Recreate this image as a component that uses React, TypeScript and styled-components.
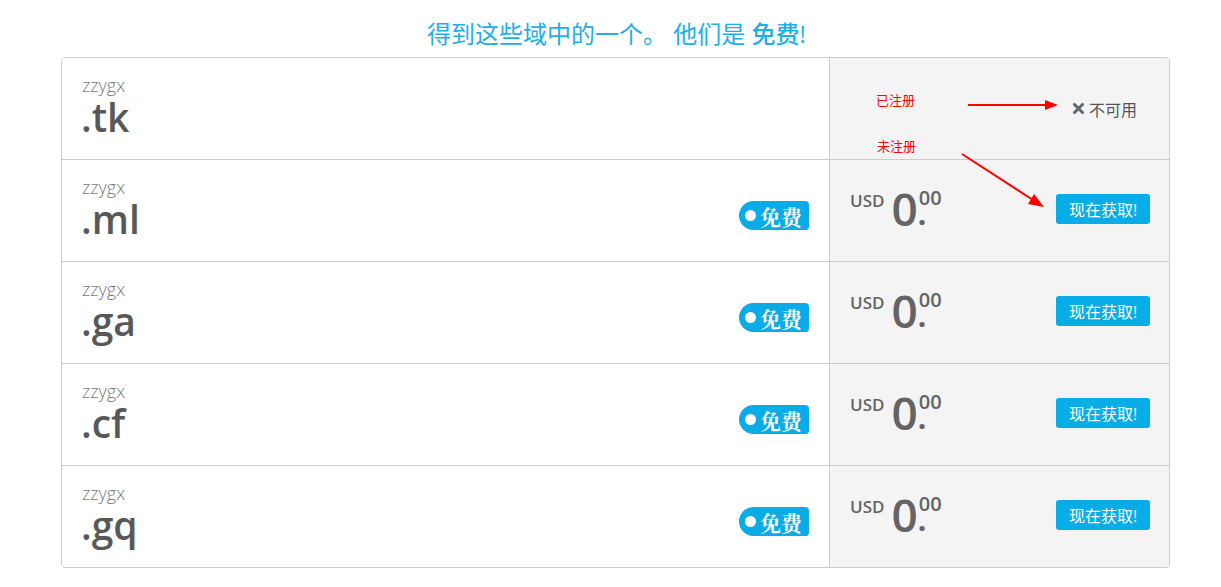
import React, { FunctionComponent } from 'react';
import styled, { createGlobalStyle } from 'styled-components';

const GlobalStyle = createGlobalStyle`
  body {
    margin: 0;
    background: #fff;
    font-family: "Open Sans", "Noto Sans CJK SC", sans-serif;
  }
`;

type Domain = {
  name: string;
  tld: string;
  available: boolean;
};

const domains: Domain[] = [
  { name: 'zzygx', tld: '.tk', available: false },
  { name: 'zzygx', tld: '.ml', available: true },
  { name: 'zzygx', tld: '.ga', available: true },
  { name: 'zzygx', tld: '.cf', available: true },
  { name: 'zzygx', tld: '.gq', available: true },
];

const TimesIcon = () => (
  <CrossIcon width="11" height="11" viewBox="0 0 11 11">
    <path d="M1.5 1.5 L9.5 9.5 M9.5 1.5 L1.5 9.5" stroke="#5f6770" strokeWidth="3" strokeLinecap="round" />
  </CrossIcon>
);

const Row: FunctionComponent<{ domain: Domain }> = ({ domain }) => (
  <Line>
    <NameCell>
      <NameBlock>
        <Sld>{domain.name}</Sld>
        <Tld>{domain.tld}</Tld>
      </NameBlock>
      {domain.available && (
        <FreeTag>
          <Dot />
          免费
        </FreeTag>
      )}
    </NameCell>
    <PriceCell>
      {domain.available ? (
        <>
          <Price>
            <Currency>USD</Currency>
            <Amount>0</Amount>
            <Cents>
              <CentsDigits>00</CentsDigits>
              <Point>.</Point>
            </Cents>
          </Price>
          <ActionSlot>
            <GetButton>现在获取!</GetButton>
          </ActionSlot>
        </>
      ) : (
        <>
          <span />
          <ActionSlot>
            <Unavailable>
              <TimesIcon />
              不可用
            </Unavailable>
          </ActionSlot>
        </>
      )}
    </PriceCell>
  </Line>
);

export default function App() {
  return (
    <>
      <GlobalStyle />
      <Title>
        得到这些域中的一个。 他们是 <strong>免费</strong>!
      </Title>
      <TableWrap>
        <Table>
          {domains.map((d) => (
            <Row key={d.tld} domain={d} />
          ))}
        </Table>
        <Note style={{ left: 815, top: 33 }}>已注册</Note>
        <Note style={{ left: 816, top: 79 }}>未注册</Note>
        <Arrows width="1109" height="200" viewBox="0 0 1109 200">
          <line x1="907" y1="48" x2="986" y2="48" stroke="#f00" strokeWidth="2" />
          <polygon points="984,43 997,48 984,53" fill="#f00" />
          <line x1="901" y1="97" x2="972" y2="143" stroke="#f00" strokeWidth="2" />
          <polygon points="967,147 983,150 973,137" fill="#f00" />
        </Arrows>
      </TableWrap>
    </>
  );
}

const Title = styled.h2`
  margin: 0;
  padding: 19px 0 9px 12px;
  text-align: center;
  font-size: 24px;
  line-height: 29px;
  font-weight: 400;
  color: #1cb0e6;

  strong {
    font-weight: 500;
  }
`;

const TableWrap = styled.div`
  position: relative;
  width: 1109px;
  margin-left: 61px;
`;

const Table = styled.div`
  border: 1px solid #ccc;
  border-radius: 4px;
  overflow: hidden;
`;

const Line = styled.div`
  display: grid;
  grid-template-columns: 768px 340px;
  height: 101px;
  border-top: 1px solid #ccc;

  &:first-child {
    border-top: none;
  }
`;

const NameCell = styled.div`
  display: flex;
  align-items: flex-end;
  justify-content: space-between;
  padding: 0 20px 0 20px;
  background: #fff;
  border-right: 1px solid #ccc;
`;

const NameBlock = styled.div`
  display: flex;
  flex-direction: column;
  padding-top: 16px;
  align-self: flex-start;
`;

const Sld = styled.div`
  font-size: 18px;
  line-height: 22px;
  font-weight: 300;
  color: #7a7a7a;
`;

const Tld = styled.div`
  font-size: 39px;
  line-height: 41px;
  font-weight: 600;
  color: #585858;
  margin-left: -1px;
`;

const FreeTag = styled.div`
  display: flex;
  align-items: center;
  gap: 4px;
  height: 29px;
  margin-bottom: 31px;
  padding: 0 7px 0 6px;
  border-radius: 15px 4px 4px 15px;
  background: #09ace6;
  color: #fff;
  font-family: "Noto Serif CJK SC", "Noto Sans CJK SC", serif;
  font-size: 21px;
  font-weight: 700;
`;

const Dot = styled.span`
  width: 11px;
  height: 11px;
  border-radius: 50%;
  background: #fff;
`;

const PriceCell = styled.div`
  display: flex;
  align-items: center;
  justify-content: space-between;
  padding: 0 20px 0 20px;
  background: #f4f4f4;
`;

const Price = styled.div`
  display: flex;
  align-items: flex-start;
  color: #646464;
  font-weight: 600;
  margin-top: -6px;
`;

const Currency = styled.span`
  font-size: 17px;
  line-height: 20px;
  margin-top: 6px;
  margin-right: 7px;
`;

const Amount = styled.span`
  font-size: 46px;
  line-height: 46px;
`;

const Cents = styled.span`
  display: flex;
  flex-direction: column;
  align-items: flex-start;
  margin-left: 1px;
  margin-top: 3px;
`;

const CentsDigits = styled.span`
  font-size: 20px;
  line-height: 20px;
`;

const Point = styled.span`
  font-size: 30px;
  line-height: 12px;
  font-weight: 700;
  margin-left: -1px;
`;

const ActionSlot = styled.div`
  width: 94px;
  display: flex;
  justify-content: center;
`;

const GetButton = styled.button`
  width: 94px;
  height: 30px;
  margin-top: -3px;
  border: none;
  border-radius: 3px;
  background: #06ade6;
  color: #fff;
  font-family: "Open Sans", "Noto Sans CJK SC", sans-serif;
  font-size: 16px;
  padding: 0;
`;

const Unavailable = styled.span`
  display: flex;
  align-items: center;
  gap: 5px;
  font-size: 16px;
  color: #555;
  white-space: nowrap;
  margin-left: 4px;
`;

const CrossIcon = styled.svg`
  display: block;
`;

const Note = styled.span`
  position: absolute;
  font-family: "Noto Sans CJK SC", sans-serif;
  font-size: 13px;
  color: #f00;
`;

const Arrows = styled.svg`
  position: absolute;
  left: 0;
  top: 0;
  pointer-events: none;
`;
